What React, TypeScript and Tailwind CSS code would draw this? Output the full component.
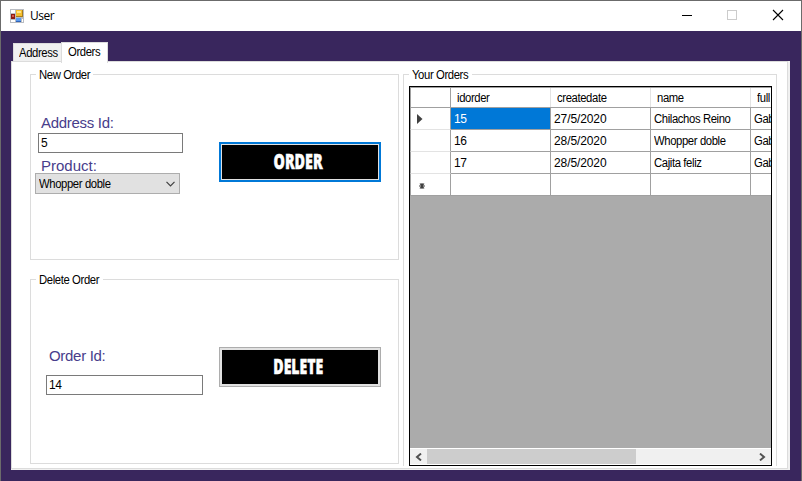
import type { ReactNode } from "react";

const rows = [
  { id: "15", date: "27/5/2020", name: "Chilachos Reino", full: "Gab", current: true },
  { id: "16", date: "28/5/2020", name: "Whopper doble", full: "Gab", current: false },
  { id: "17", date: "28/5/2020", name: "Cajita feliz", full: "Gab", current: false },
];

const headers = ["idorder", "createdate", "name", "full"];

const narrow = "inline-block origin-left scale-x-[0.94] tracking-[-0.4px] whitespace-nowrap";

function AppIcon() {
  return (
    <svg width="14" height="14" viewBox="0 0 14 14" shapeRendering="crispEdges">
      <path fill="#b9bcc2" d="M0 0h14v14H0z" />
      <path fill="#fff" d="M1 1h4v3H1zM1 11h4v2H1zM12 10h1v3h-1z" />
      <path fill="#a87c1c" d="M6 1h7v7H6z" />
      <path fill="#f5c030" d="M6 1h6v6H6z" />
      <path fill="#ffe58a" d="M7 2h4v2H7z" />
      <path fill="#8e1b12" d="M1 5h4v5H1z" />
      <path fill="#d8574a" d="M2 6h2v2H2z" />
      <path fill="#2f62b8" d="M6 9h5v4H6z" />
      <path fill="#5a9bf0" d="M6 9h5v3H6z" />
    </svg>
  );
}

function TitleBar() {
  return (
    <header className="flex h-[30px] items-center bg-white pl-[9px]">
      <AppIcon />
      <span className="ml-[6px] flex-1 font-['Open_Sans',sans-serif] text-[12px] leading-[16px] tracking-[-0.5px]">User</span>
      <svg width="120" height="30" viewBox="0 0 120 30" fill="none" shapeRendering="crispEdges">
        <path d="M1 14.5h10" stroke="#000" />
        <rect x="46.5" y="9.5" width="9" height="9" stroke="#ccc" />
        <path d="M92 9l10 10M102 9l-10 10" stroke="#000" strokeWidth="1.1" shapeRendering="auto" />
      </svg>
    </header>
  );
}

function Group({ title, className, children, open }: { title: string; className: string; children: ReactNode; open?: boolean }) {
  return (
    <section className={`flex flex-col border-x border-t border-[#dcdcdc] ${open ? "" : "border-b"} ${className}`}>
      <h2 className="-mt-[7px] ml-[5px] h-[14px] self-start bg-white pl-[3px] text-[12px] leading-[14px]">
        <span className={narrow}>{title}</span>
      </h2>
      {children}
    </section>
  );
}

function ActionButton({ label, focused, className }: { label: string; focused?: boolean; className: string }) {
  return (
    <button className={`h-[40px] w-[162px] bg-[#e1e1e1] ${focused ? "border-2 border-[#0078d7] p-px" : "border border-[#adadad] p-[2px]"} ${className}`}>
      <span className="flex h-full items-center justify-center bg-black pr-[3px] pb-[2px]">
        <span className={`inline-block font-['Open_Sans',sans-serif] text-[21px] leading-[24px] font-extrabold text-white [-webkit-text-stroke:0.5px_white] ${focused ? "scale-x-[0.68]" : "scale-x-[0.67]"}`}>{label}</span>
      </span>
    </button>
  );
}

function OrdersGrid() {
  return (
    <div className="mt-[4px] ml-[5px] flex h-[380px] w-[363px] flex-col overflow-hidden border border-black bg-[#ababab]">
      <div className="flex h-[21px] border-t border-b border-[#a0a0a0] bg-white">
        <div className="w-[41px] shrink-0 border-r border-l border-[#a0a0a0]" />
        {headers.map((h) => (
          <div key={h} className="w-[100px] shrink-0 border-r border-[#e3e3e3] pl-[6px] text-[12px] leading-[20px]">
            <span className={narrow}>{h}</span>
          </div>
        ))}
      </div>
      {rows.map((r) => (
        <div key={r.id} className="flex h-[22px] bg-white text-[12px] leading-[22px]">
          <div className="flex w-[41px] shrink-0 items-center border-r border-b border-l border-r-[#a0a0a0] border-b-[#e3e3e3] border-l-[#a0a0a0] pt-px pl-[6px]">
            {r.current && (
              <svg width="6" height="10" viewBox="0 0 6 10"><path d="M0 0v10L5.5 5z" fill="#404040" /></svg>
            )}
          </div>
          <div className={`w-[100px] shrink-0 border-r border-b border-[#a0a0a0] pl-[3px] tracking-[-0.5px] ${r.current ? "bg-[#0078d7] text-white" : ""}`}>{r.id}</div>
          <div className="w-[100px] shrink-0 border-r border-b border-[#a0a0a0] pl-[3px] tracking-[-0.1px]">{r.date}</div>
          <div className="w-[100px] shrink-0 border-r border-b border-[#a0a0a0] pl-[3px]">
            <span className={narrow}>{r.name}</span>
          </div>
          <div className="w-[100px] shrink-0 border-r border-b border-[#a0a0a0] pl-[3px]">
            <span className={narrow}>{r.full}</span>
          </div>
        </div>
      ))}
      <div className="flex h-[22px] bg-white">
        <div className="flex w-[41px] shrink-0 items-center border-r border-b border-l border-[#a0a0a0] pt-[3px] pl-[8px]">
          <svg width="6" height="6" viewBox="0 0 6 6"><path d="M1 0.5l4 5M5 0.5l-4 5M0 3h6M3 0v6" stroke="#404040" strokeWidth="1.2" /></svg>
        </div>
        {headers.map((h) => (
          <div key={h} className="w-[100px] shrink-0 border-r border-b border-[#a0a0a0]" />
        ))}
      </div>
      <div className="flex-1" />
      <div className="flex h-[17px] items-stretch border-t border-b border-white bg-[#f0f0f0]">
        <div className="flex w-[17px] items-center justify-center">
          <svg width="7" height="8" viewBox="0 0 7 8"><path d="M6 0.6L2 4L6 7.4" fill="none" stroke="#505050" strokeWidth="2" /></svg>
        </div>
        <div className="w-[209px] bg-[#cdcdcd]" />
        <div className="flex-1" />
        <div className="flex w-[17px] items-center justify-center">
          <svg width="7" height="8" viewBox="0 0 7 8"><path d="M1 0.6L5 4L1 7.4" fill="none" stroke="#505050" strokeWidth="2" /></svg>
        </div>
      </div>
    </div>
  );
}

const label = "block text-[15px] leading-[18px] tracking-[-0.3px] text-[#483d8b] whitespace-nowrap";
const input = "h-[20px] border border-[#7a7a7a] bg-white pl-[2px] text-[12px] leading-[18px] tracking-[-0.4px]";

export default function App() {
  return (
    <div className="flex h-[481px] w-[802px] flex-col overflow-hidden border-x border-t border-[#6b6b6b] bg-[#39265d] font-['Liberation_Sans',Arial,sans-serif] text-[12px] text-black">
      <TitleBar />
      <nav className="flex h-[31px] items-end pl-[12px]">
        <div className="h-[19px] w-[48px] border-t border-l border-[#dcdcdc] bg-[#f0f0f0] pl-[5px] leading-[18px]">
          <span className={narrow}>Address</span>
        </div>
        <div className="z-10 -mb-px h-[21px] w-[47px] border-x border-t border-[#dcdcdc] bg-white pl-[6px] leading-[18px]">
          <span className={narrow}>Orders</span>
        </div>
      </nav>
      <main className="-mt-px ml-[10px] flex h-[409px] w-[779px] border-r-2 border-b border-[#f0f0f0]">
        <div className="flex w-full border border-[#dcdcdc] bg-white">
          <div className="mt-[12px] ml-[18px] flex flex-col">
            <Group title="New Order" className="h-[186px] w-[369px]">
              <div className="flex">
                <div className="flex w-[188px] flex-col pt-[32px]">
                  <span className={`${label} ml-[10px]`}>Address Id:</span>
                  <div className={`${input} mt-px ml-[7px] w-[145px]`}>5</div>
                  <span className="mt-[4px] ml-[10px] block text-[15px] leading-[18px] whitespace-nowrap text-[#483d8b]">Product:</span>
                  <div className="-mt-[2px] ml-[4px] flex h-[21px] w-[145px] items-center justify-between border border-[#adadad] bg-[#e1e1e1] pr-[4px] pl-[3px]">
                    <span className={narrow}>Whopper doble</span>
                    <svg width="9" height="6" viewBox="0 0 9 6"><path d="M0.5 0.8L4.5 4.8L8.5 0.8" fill="none" stroke="#404040" strokeWidth="1.2" /></svg>
                  </div>
                </div>
                <ActionButton label="ORDER" focused className="mt-[60px]" />
              </div>
            </Group>
            <Group title="Delete Order" className="mt-[19px] h-[185px] w-[369px]">
              <div className="flex">
                <div className="flex w-[188px] flex-col pt-[60px]">
                  <span className={`${label} ml-[18px]`}>Order Id:</span>
                  <div className={`${input} mt-[10px] ml-[15px] w-[157px]`}>14</div>
                </div>
                <ActionButton label="DELETE" className="mt-[60px]" />
              </div>
            </Group>
          </div>
          <Group title="Your Orders" open className="mt-[12px] ml-[4px] h-[392px] w-[374px]">
            <OrdersGrid />
          </Group>
        </div>
      </main>
    </div>
  );
}
